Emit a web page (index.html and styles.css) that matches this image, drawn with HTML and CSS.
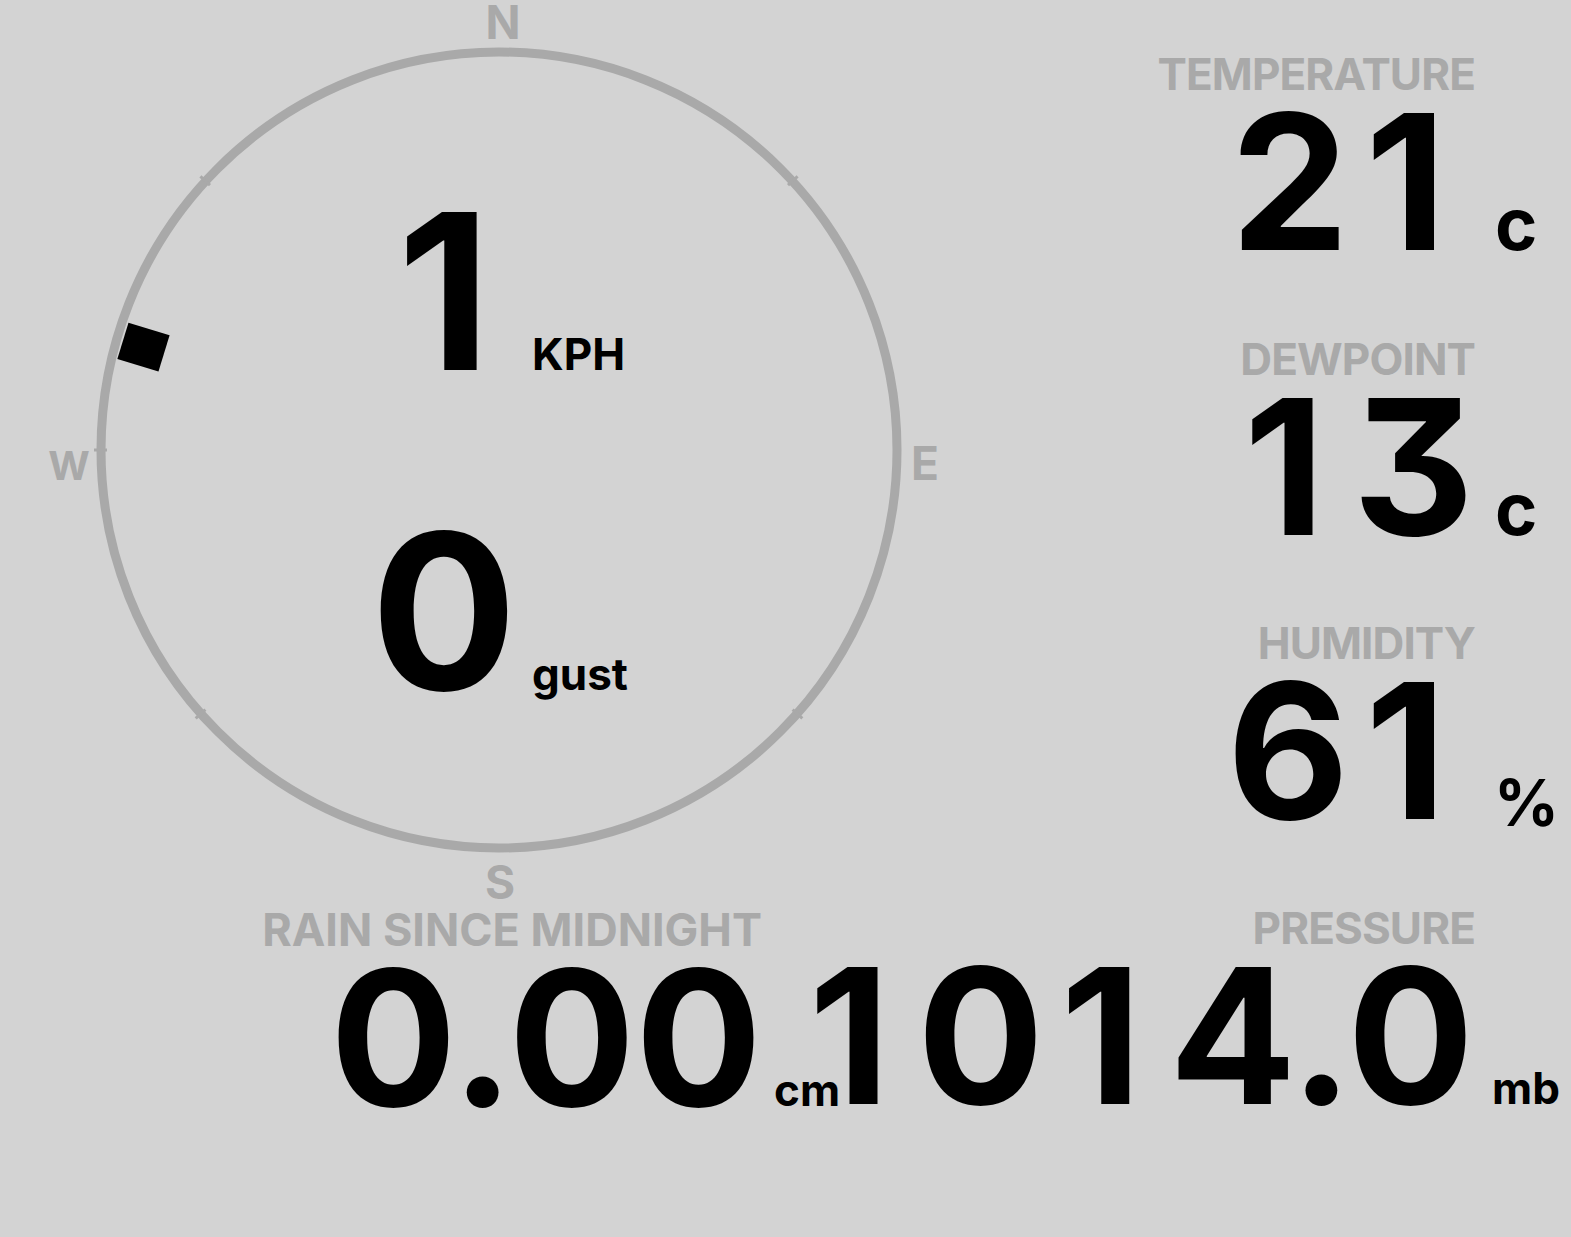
FILE: index.html
```html
<!DOCTYPE html>
<html lang="en">
<head>
    <meta charset="UTF-8">
    <meta name="viewport" content="width=device-width, initial-scale=1.0">
    <title>Weather Station</title>
    <link rel="stylesheet" href="styles.css">
</head>
<body>
    <div class="station">
        <!-- Wind compass + rain -->
        <div class="left-col">
            <div class="compass">
                <svg class="compass-dial" width="998" height="907" viewBox="0 0 998 907">
                    <circle class="dial-ring" cx="499" cy="450" r="398"/>
                    <g class="dial-ticks">
                        <line x1="499" y1="45" x2="499" y2="58" transform="rotate(47.5 499 450)"/>
                        <line x1="499" y1="45" x2="499" y2="58" transform="rotate(131.5 499 450)"/>
                        <line x1="499" y1="45" x2="499" y2="58" transform="rotate(228.5 499 450)"/>
                        <line x1="499" y1="45" x2="499" y2="58" transform="rotate(312.5 499 450)"/>
                        <line x1="499" y1="45" x2="499" y2="58" transform="rotate(270 499 450)"/>
                    </g>
                    <text class="dial-label" x="503" y="39">N</text>
                    <text class="dial-label" x="925" y="480">E</text>
                    <text class="dial-label" x="500" y="899">S</text>
                    <text class="dial-label west" x="69" y="480">W</text>
                    <rect class="wind-dir" x="-21" y="-19" width="43" height="38" transform="translate(143 347) rotate(17)"/>
                </svg>
                <div class="wind">
                    <div class="wind-row">
                        <span class="wind-value">1</span>
                        <span class="wind-unit">KPH</span>
                    </div>
                    <div class="wind-row">
                        <span class="wind-value">0</span>
                        <span class="wind-unit">gust</span>
                    </div>
                </div>
            </div>

            <div class="stat rain">
                <div class="stat-label">RAIN SINCE MIDNIGHT</div>
                <div class="stat-row">
                    <span class="stat-value">0.00</span>
                    <span class="stat-unit small">cm</span>
                </div>
            </div>
        </div>

        <!-- Readings -->
        <div class="right-col">
            <div class="stat">
                <div class="stat-label">TEMPERATURE</div>
                <div class="stat-row">
                    <span class="stat-value">2<span class="one">1</span></span>
                    <span class="stat-unit">c</span>
                </div>
            </div>
            <div class="stat">
                <div class="stat-label">DEWPOINT</div>
                <div class="stat-row">
                    <span class="stat-value"><span class="one">1</span>3</span>
                    <span class="stat-unit">c</span>
                </div>
            </div>
            <div class="stat">
                <div class="stat-label">HUMIDITY</div>
                <div class="stat-row">
                    <span class="stat-value">6<span class="one">1</span></span>
                    <span class="stat-unit percent"><span class="drop">%</span></span>
                </div>
            </div>
            <div class="stat">
                <div class="stat-label">PRESSURE</div>
                <div class="stat-row">
                    <span class="stat-value"><span class="one">1</span>0<span class="one">1</span>4.0</span>
                    <span class="stat-unit small">mb</span>
                </div>
            </div>
        </div>
    </div>
</body>
</html>
```

FILE: styles.css
```css
/* Reset */
* {
    margin: 0;
    padding: 0;
    box-sizing: border-box;
}

body {
    font-family: "Inter", "Noto Sans", sans-serif;
    font-weight: 700;
    background-color: #d3d3d3;
    color: #000;
    width: 1571px;
    height: 1237px;
    overflow: hidden;
}

/* Page layout */
.station {
    display: grid;
    grid-template-columns: 998px minmax(0, 1fr);
}

.left-col {
    display: flex;
    flex-direction: column;
}

.right-col {
    display: flex;
    flex-direction: column;
    gap: 68.5px;
    padding-top: 51px;
}

/* Compass */
.compass {
    position: relative;
    width: 998px;
    height: 907px;
}

.compass-dial {
    display: block;
}

.dial-ring {
    fill: none;
    stroke: #a9a9a9;
    stroke-width: 9;
}

.dial-ticks line {
    stroke: #a9a9a9;
    stroke-width: 3;
}

.dial-label {
    font-family: "Inter", "Noto Sans", sans-serif;
    font-weight: 700;
    font-size: 46px;
    fill: #a9a9a9;
    text-anchor: middle;
}

.dial-label.west {
    font-size: 40px;
}

.wind-dir {
    fill: #000;
}

/* Wind speed sits over the dial */
.wind {
    position: absolute;
    top: 131px;
    left: 0;
    right: 0;
    padding-left: 369px;
}

.wind-row {
    display: flex;
    align-items: baseline;
    line-height: 320px;
}

.wind-value {
    width: 150px;
    text-align: center;
    font-size: 217px;
}

.wind-unit {
    padding-left: 13px;
    font-size: 44px;
    line-height: 1;
}

/* Readings */
.stat-label {
    font-size: 44px;
    line-height: 46px;
    letter-spacing: -0.9px;
    color: #a9a9a9;
    text-align: right;
    padding-right: 96px;
    white-space: nowrap;
}

.stat-row {
    display: flex;
    justify-content: flex-end;
    align-items: baseline;
    line-height: 170px;
}

.stat-value {
    flex-shrink: 0;
    font-size: 188px;
    font-feature-settings: "cv09" 1;
    white-space: nowrap;
}

/* the display keeps every digit the same width */
.stat-value .one {
    display: inline-block;
    width: 0.665em;
    padding-right: 0.06em;
    text-align: center;
}

.stat-unit {
    flex-shrink: 0;
    width: 97px;
    padding-left: 21px;
    font-size: 72px;
    line-height: 1;
}

.stat-unit.percent {
    font-size: 64px;
    padding-left: 20px;
}

.stat-unit .drop {
    vertical-align: -7px;
}

.stat-unit.small {
    font-size: 44px;
    padding-left: 18px;
}

.rain {
    width: 859px;
}

.rain .stat-label {
    font-size: 45px;
    letter-spacing: 0;
    padding-right: 97px;
}

.rain .stat-unit {
    padding-left: 12px;
}
```
